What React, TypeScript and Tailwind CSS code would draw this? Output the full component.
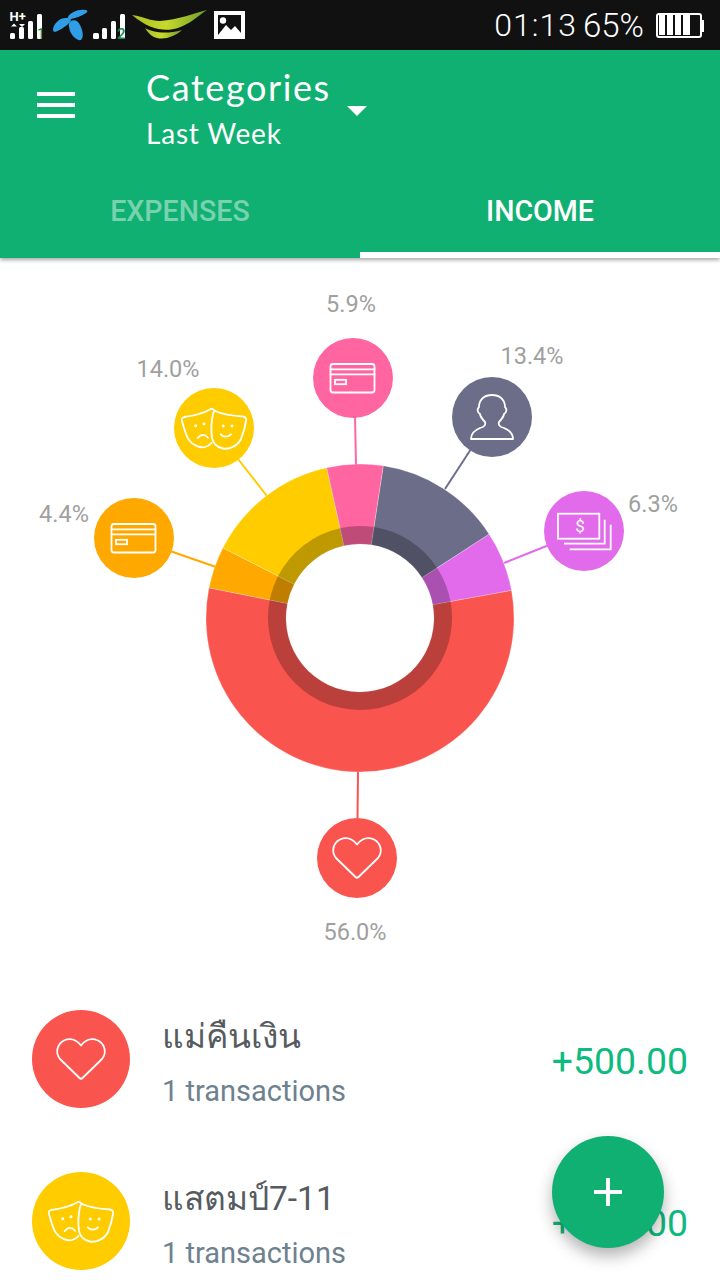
const CX = 360;
const CY = 618;

type IconName = 'heart' | 'card' | 'masks' | 'person' | 'money';

const slices = [
  { color: '#6c6d89', from: 8.7, to: 57 },
  { color: '#e26beb', from: 57, to: 79.7 },
  { color: '#fa544e', from: 79.7, to: 281.3 },
  { color: '#ffa800', from: 281.3, to: 297.1 },
  { color: '#ffcc00', from: 297.1, to: 347.5 },
  { color: '#ff66a1', from: 347.5, to: 368.7 },
];

const bubbles: { color: string; icon: IconName; x: number; y: number; line: number[]; label: string; lx: number; ly: number }[] = [
  { color: '#fa544e', icon: 'heart', x: 357, y: 858, line: [358, 771, 357.5, 820], label: '56.0%', lx: 355, ly: 940 },
  { color: '#ffa800', icon: 'card', x: 134, y: 538, line: [170, 551, 216, 567], label: '4.4%', lx: 64, ly: 522 },
  { color: '#ffcc00', icon: 'masks', x: 214, y: 428, line: [238, 459, 267, 496], label: '14.0%', lx: 168, ly: 377 },
  { color: '#ff66a1', icon: 'card', x: 353, y: 378, line: [355, 416, 356, 465], label: '5.9%', lx: 351, ly: 312 },
  { color: '#6c6d89', icon: 'person', x: 492, y: 417, line: [471, 449, 445, 489], label: '13.4%', lx: 532, ly: 364 },
  { color: '#e26beb', icon: 'money', x: 584, y: 531, line: [549, 545, 504, 563], label: '6.3%', lx: 653, ly: 512 },
];

const polar = (r: number, deg: number) => {
  const a = (deg * Math.PI) / 180;
  return [CX + r * Math.sin(a), CY - r * Math.cos(a)];
};

const arc = (r1: number, r2: number, from: number, to: number) => {
  const [x1, y1] = polar(r2, from);
  const [x2, y2] = polar(r2, to);
  const [x3, y3] = polar(r1, to);
  const [x4, y4] = polar(r1, from);
  const large = to - from > 180 ? 1 : 0;
  return `M${x1} ${y1}A${r2} ${r2} 0 ${large} 1 ${x2} ${y2}L${x3} ${y3}A${r1} ${r1} 0 ${large} 0 ${x4} ${y4}Z`;
};

const Glyph = ({ name }: { name: IconName }) => {
  const line = { fill: 'none', stroke: '#fff', strokeWidth: 1.8, strokeLinejoin: 'round' as const, strokeLinecap: 'round' as const };
  if (name === 'heart') {
    return <path {...line} d="M-1.5 19 L-21 0 C-26 -6 -24 -15 -17 -18.5 C-10 -21.5 -4 -18.5 0 -13.5 C4 -18.5 10 -21.5 17 -18.5 C24 -15 26 -6 21 0 L1.5 19 C0.5 20 -0.5 20 -1.5 19 Z" />;
  }
  if (name === 'card') {
    return (
      <g {...line}>
        <rect x="-22.5" y="-14" width="44" height="28.5" rx="2.5" />
        <path d="M-22.5 -8.7H21.5M-22.5 -3.7H21.5" />
        <rect x="-18" y="1.8" width="11" height="4.4" strokeLinejoin="miter" />
      </g>
    );
  }
  if (name === 'masks') {
    return (
      <g {...line}>
        <path d="M-3 -19 C-10 -15 -22 -12 -30 -11 C-32 -10.5 -32.5 -9 -32 -7 C-30 0 -28 8 -25 12 C-21 18 -13 20 -9 19 C-6 18 -4 17 -2.5 15" />
        <path d="M1 -17 C10 -13 20 -12 29 -11.5 C32 -11 32.5 -9 32 -7 C31 0 29 6 27 11 C23 19 14 21.5 9 20.5 C3 19.5 -1 15 -2 10 C-3 3 -3 -5 -1 -14 C-0.5 -16 0 -17 1 -17 Z" />
        <path d="M-3 -19 C-2 -19.5 0 -18.5 1 -17" />
        <path d="M-16.3 10 C-13 6 -9 6 -6 9.7" />
        <path d="M6.7 6.3 C9 9.5 14 9.5 17 6.3" />
        <circle cx="-18.3" cy="-2.3" r="0.6" />
        <circle cx="-10" cy="-4.3" r="0.6" />
        <circle cx="9.3" cy="-2" r="0.6" />
        <circle cx="18" cy="-2" r="0.6" />
      </g>
    );
  }
  if (name === 'person') {
    return <path {...line} d="M-21 22 C-21 16 -17 13 -12 11 C-8 10 -6 8 -7 5 C-10 2 -12 -2 -12 -3 C-15 -5 -15 -8 -13 -10 C-13 -18 -7 -22 0 -22 C7 -22 13 -18 13 -10 C15 -8 15 -5 12 -3 C12 -2 10 2 7 5 C6 8 8 10 12 11 C17 13 21 16 21 22 Z" />;
  }
  return (
    <g {...line} strokeLinejoin="miter" strokeLinecap="butt">
      <rect x="-26" y="-17.3" width="41.3" height="25" />
      <path d="M-20 12.7H20.7V-11.3M-14.3 18.3H26.7V-6.3" />
      <text x="-4" y="1" textAnchor="middle" fontSize="17" fontFamily="Roboto, sans-serif" fill="#fff" stroke="none">$</text>
    </g>
  );
};

const Donut = () => (
  <svg width="720" height="752" viewBox="0 258 720 752" className="block">
    {bubbles.map((b) => (
      <line key={b.label} x1={b.line[0]} y1={b.line[1]} x2={b.line[2]} y2={b.line[3]} stroke={b.color} strokeWidth="2" />
    ))}
    {slices.map((s) => (
      <path key={s.color} d={arc(74, 154, s.from, s.to)} fill={s.color} stroke="#fff" strokeOpacity="0.3" strokeWidth="0.8" />
    ))}
    {slices.map((s) => (
      <path key={s.color} d={arc(74, 92, s.from, s.to)} fill="#000" fillOpacity="0.25" />
    ))}
    {bubbles.map((b) => (
      <g key={b.label}>
        <circle cx={b.x} cy={b.y} r="40" fill={b.color} />
        <g transform={`translate(${b.x} ${b.y})`}>
          <Glyph name={b.icon} />
        </g>
        <text x={b.lx} y={b.ly} textAnchor="middle" fontSize="23.5" fontFamily="Roboto, sans-serif" fill="#a0a0a0">
          {b.label}
        </text>
      </g>
    ))}
  </svg>
);

const StatusIcons = () => (
  <svg width="250" height="50" viewBox="0 0 250 50" className="block">
    <defs>
      <linearGradient id="ais" x1="0" y1="0" x2="1" y2="0">
        <stop offset="0" stopColor="#a8bd22" />
        <stop offset="0.45" stopColor="#c8da2c" />
        <stop offset="1" stopColor="#6f9a2a" />
      </linearGradient>
    </defs>
    <text x="9.5" y="20.5" fontSize="13" fontWeight="700" fontFamily="Roboto, sans-serif" fill="#fff">H+</text>
    <path d="M11 26.5L14 23.5L17 26.5ZM19 24H25L22 27Z" fill="#fff" />
    <g fill="#fff">
      <rect x="10" y="33" width="5" height="6" rx="1.5" />
      <rect x="19" y="27" width="5" height="12" rx="1.5" />
      <rect x="28" y="21" width="5" height="18" rx="1.5" />
      <rect x="37" y="14" width="5" height="25" rx="1.5" />
      <rect x="93" y="33" width="6" height="6" rx="1.5" />
      <rect x="102" y="28" width="5" height="11" rx="1.5" />
      <rect x="111" y="21" width="5" height="18" rx="1.5" />
      <rect x="120" y="14" width="5" height="25" rx="1.5" />
    </g>
    <text x="37" y="39" fontSize="14" fontFamily="Roboto, sans-serif" fill="#178a4a">1</text>
    <text x="117" y="39" fontSize="15" fontWeight="500" fontFamily="Roboto, sans-serif" fill="#178a4a">2</text>
    <g fill="#2f9ee6">
      <path d="M53 30 C53 24 60 17 67 18 C72 18 72 21 68 24 C64 28 58 31 55 32 C54 32 53 31 53 30 Z" />
      <path d="M68 17 C70 13 78 9 85 10 C88 10 88 12 86 13 C82 16 76 18 71 19 C68 19.5 67 18 68 17 Z" />
      <path d="M70 22 C73 19 78 20 80 25 C83 31 84 37 81 40 C77 41 72 36 70 31 C69 27 68 24 70 22 Z" />
    </g>
    <path d="M132 15 C145 17 150 21 160 21 C178 20 195 13 207 10 C198 16 190 24 178 28 C165 32 150 30 132 15 Z" fill="url(#ais)" />
    <path d="M145 28 C152 32 165 35 182 30 C176 36 165 40 157 38 C152 37 148 33 145 28 Z" fill="url(#ais)" />
    <rect x="214" y="11" width="31" height="28" fill="#fff" />
    <rect x="218" y="15" width="23" height="20" fill="#111" />
    <circle cx="223" cy="20.5" r="3.2" fill="#fff" />
    <path d="M218 35L226 25L231 30L235 26L241 33V35Z" fill="#fff" />
  </svg>
);

const Battery = () => (
  <svg width="48" height="25" viewBox="0 0 48 25" className="block">
    <rect x="1" y="1" width="44" height="23" rx="2" fill="none" stroke="#fff" strokeWidth="2" />
    <rect x="46" y="7" width="2" height="12" fill="#fff" />
    <g fill="#fff">
      <rect x="3" y="2" width="6" height="20" />
      <rect x="11" y="2" width="6" height="20" />
      <rect x="19" y="2" width="6" height="20" />
      <rect x="27" y="2" width="7" height="20" />
    </g>
  </svg>
);

const Row = ({ color, icon, title, amount }: { color: string; icon: IconName; title: string; amount: string }) => (
  <div className="flex h-[98px] items-center">
    <svg width="98" height="98" viewBox="-49 -49 98 98" className="block shrink-0">
      <circle r="49" fill={color} />
      <Glyph name={icon} />
    </svg>
    <div className="ml-[32px] flex flex-1 flex-col pt-[6px]">
      <div className="text-[33.5px] leading-[44px] text-[#555b5f]">{title}</div>
      <div className="mt-[14px] text-[29px] leading-[36px] text-[#6d818e]">1 transactions</div>
    </div>
    <div className="pt-[4px] text-[37.4px] leading-[44px] text-[#0dbb80]">{amount}</div>
  </div>
);

export default function App() {
  return (
    <div className="relative flex h-[1280px] w-[720px] flex-col overflow-hidden bg-white font-[Roboto,'Noto_Sans',sans-serif]">
      <div className="relative z-10 shadow-[0_2px_4px_rgba(0,0,0,0.35)]">
        <div className="flex h-[50px] items-center justify-between bg-[#111111] pr-4 text-white">
          <StatusIcons />
          <div className="flex items-center">
            <span className="text-[32px] leading-none font-light tracking-[1px]">01:13</span>
            <span className="ml-[6px] text-[33px] leading-none font-light">65%</span>
            <div className="ml-3">
              <Battery />
            </div>
          </div>
        </div>
        <div className="flex h-[208px] flex-col bg-[#10b072]">
          <div className="flex h-[120px] items-start text-white">
            <div className="mt-[42px] ml-[37px] flex w-[38px] flex-col gap-[7px]">
              <div className="h-1 bg-white" />
              <div className="h-1 bg-white" />
              <div className="h-1 bg-white" />
            </div>
            <div className="mt-[14px] ml-[71px] flex flex-col font-['Lato',sans-serif]">
              <span className="text-[36px] leading-[46px] tracking-[1.6px]">Categories</span>
              <span className="text-[28px] leading-[46px] tracking-[0.8px]">Last Week</span>
            </div>
            <svg width="20" height="10" viewBox="0 0 20 10" className="mt-[56px] ml-[16px] block">
              <path d="M0 0H20L10 10Z" fill="#fff" />
            </svg>
          </div>
          <div className="flex flex-1">
            <div className="flex flex-1 items-center justify-center pb-[6px] text-[28.6px] font-medium text-white/45">EXPENSES</div>
            <div className="flex flex-1 items-center justify-center border-b-[6px] border-white text-[28.6px] font-medium text-white">INCOME</div>
          </div>
        </div>
      </div>
      <Donut />
      <div className="flex flex-col gap-16 pr-8 pl-8">
        <Row color="#fa544e" icon="heart" title="แม่คืนเงิน" amount="+500.00" />
        <Row color="#ffcc00" icon="masks" title="แสตมป์7-11" amount="+500.00" />
      </div>
      <button className="absolute top-[1136px] left-[552px] flex h-28 w-28 items-center justify-center rounded-full bg-[#10b072] shadow-[0_8px_16px_rgba(0,0,0,0.3)]">
        <svg width="28" height="28" viewBox="0 0 28 28" className="block">
          <path d="M12 0H16V12H28V16H16V28H12V16H0V12H12Z" fill="#fff" />
        </svg>
      </button>
    </div>
  );
}
